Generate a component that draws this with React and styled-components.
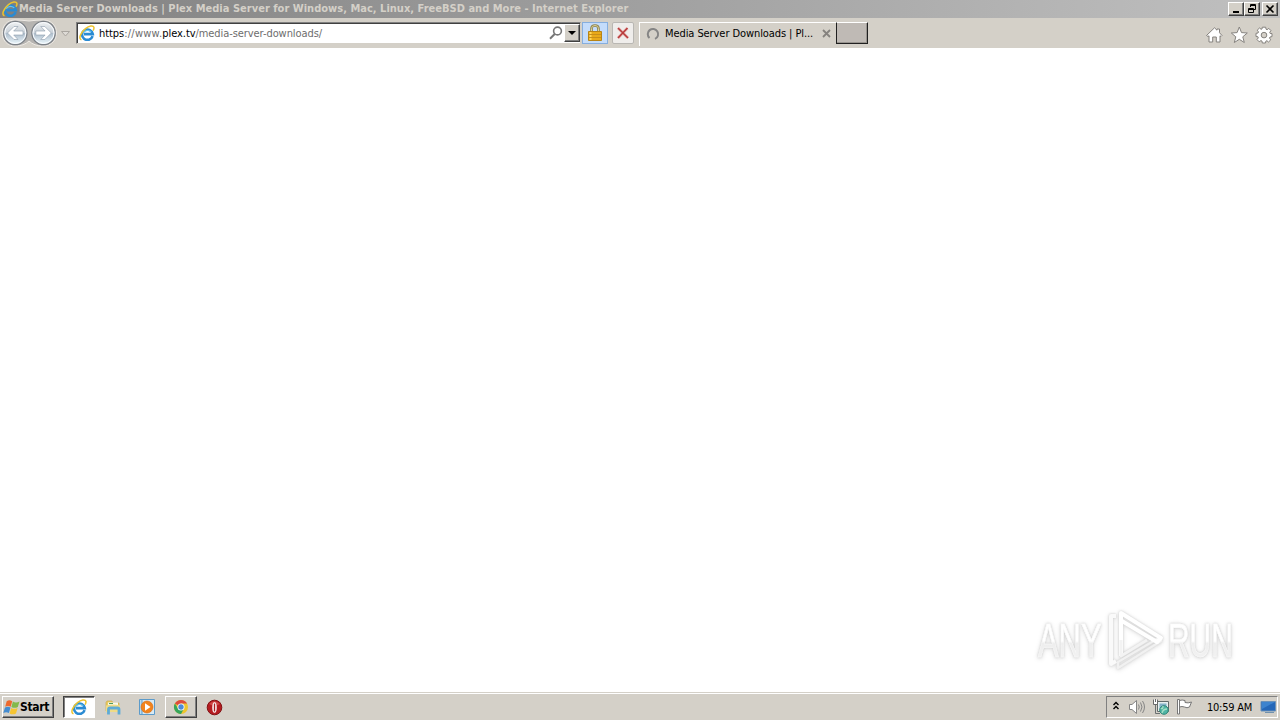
import styled, { createGlobalStyle, css } from "styled-components";

const GlobalStyle = createGlobalStyle`
  * {
    box-sizing: border-box;
  }

  body {
    margin: 0;
    overflow: hidden;
    font-family: "DejaVu Sans Condensed", "DejaVu Sans", "Liberation Sans", sans-serif;
    font-stretch: condensed;
    font-size: 11px;
    color: #000;
  }

  svg {
    display: block;
    flex: none;
  }
`;

const raised = css`
  border: 1px solid;
  border-color: #fff #404040 #404040 #fff;
  box-shadow: inset -1px -1px 0 #808080;
`;

const Screen = styled.div`
  display: flex;
  flex-direction: column;
  width: 1280px;
  height: 720px;
  background: #fff;
`;

const TitleBar = styled.header`
  display: flex;
  align-items: center;
  height: 18px;
  padding: 0 2px 0 2px;
  background: linear-gradient(90deg, #808080, #c0c0c0);
`;

const Title = styled.div`
  flex: 1;
  margin-left: 1px;
  color: #d4d0c8;
  font-weight: bold;
  line-height: 18px;
  white-space: nowrap;
  letter-spacing: 0.018px;
`;

const WindowButton = styled.button`
  ${raised}
  display: flex;
  align-items: center;
  justify-content: center;
  width: 16px;
  height: 14px;
  margin-left: ${({ $gap }) => $gap || 0}px;
  padding: 0;
  background: #d4d0c8;
`;

const NavBar = styled.nav`
  display: flex;
  align-items: flex-start;
  height: 30px;
  background: #d4d0c8;
`;

const AddressBar = styled.div`
  display: flex;
  align-items: center;
  width: 505px;
  height: 22px;
  margin: 4px 0 0 4px;
  padding-left: 2px;
  border: 1px solid;
  border-color: #808080 #d4d0c8 #d4d0c8 #808080;
  background: #fff;
  box-shadow: inset 1px 1px 0 #404040;
`;

const Url = styled.div`
  flex: 1;
  margin: 1px 0 0 4px;
  color: #6d6d6d;
  white-space: nowrap;
  letter-spacing: -0.07px;

  > b {
    color: #000;
    font-weight: normal;
  }
`;

const UrlHost = styled.span`
  letter-spacing: 0.25px;
`;

const DropButton = styled.button`
  ${raised}
  display: flex;
  align-items: center;
  justify-content: center;
  width: 16px;
  height: 18px;
  margin-left: 1px;
  padding: 0;
  background: #d4d0c8;
`;

const ToolButton = styled.button`
  display: flex;
  align-items: center;
  justify-content: center;
  width: ${({ $width }) => $width}px;
  height: 22px;
  margin: 4px 0 0 ${({ $gap }) => $gap}px;
  padding: 0;
  border: 1px solid ${({ $active }) => ($active ? "#86aede" : "#b9b7b3")};
  border-radius: ${({ $active }) => ($active ? 0 : 2)}px;
  background: ${({ $active }) => ($active ? "#c4dcfb" : "#efedeb")};
`;

const Tab = styled.div`
  display: flex;
  align-items: center;
  width: 197px;
  height: 24px;
  margin: 4px 0 0 5px;
  padding: 0 5px 2px 6px;
  border-top: 1px solid #fff;
  border-left: 1px solid #fff;
`;

const TabTitle = styled.div`
  flex: 1;
  margin-left: 5px;
  white-space: nowrap;
  letter-spacing: -0.08px;
`;

const NewTab = styled.div`
  width: 32px;
  height: 22px;
  margin-top: 4px;
  border: 1px solid;
  border-color: #fff #202020 #202020 #202020;
  background: #bfbab5;
  box-shadow: inset -1px -1px 0 #98948f;
`;

const CommandIcons = styled.div`
  display: flex;
  align-items: center;
  gap: 7px;
  margin: 8px 7px 0 auto;
`;

const Page = styled.main`
  display: flex;
  flex: 1;
  align-items: flex-end;
  justify-content: flex-end;
  padding: 0 47px 20px 0;
`;

const Watermark = styled.div`
  display: flex;
  align-items: center;
  height: 64px;
  filter: drop-shadow(0 0 1px #cfcfcf) drop-shadow(0 1px 2px #e2e2e2);
`;

const WatermarkWord = styled.div`
  width: ${({ $width }) => $width}px;

  > span {
    display: block;
    width: max-content;
    color: transparent;
    background: linear-gradient(#fff 52%, #eee 56%, #f4f4f4);
    background-clip: text;
    font-family: "Liberation Sans", Arial, sans-serif;
    font-size: 49px;
    line-height: 54px;
    -webkit-text-stroke: 0.6px #fafafa;
    transform: scaleX(${({ $scale }) => $scale});
    transform-origin: left;
  }
`;

const Taskbar = styled.footer`
  display: flex;
  align-items: flex-start;
  height: 28px;
  padding: 3px 2px 0;
  border-top: 1px solid #d4d0c8;
  background: #d4d0c8;
  box-shadow: inset 0 1px 0 #fff;
`;

const StartButton = styled.button`
  ${raised}
  display: flex;
  align-items: center;
  width: 52px;
  height: 22px;
  margin-right: 9px;
  padding: 0;
  background: #d4d0c8;
  font-family: inherit;
  font-size: 12px;
  font-weight: bold;
  font-stretch: condensed;
  letter-spacing: -0.35px;
`;

const TaskButton = styled.button`
  display: flex;
  align-items: center;
  justify-content: center;
  width: 34px;
  height: 22px;
  padding: 0;
  border: 1px solid transparent;
  background: transparent;
  ${({ $look }) =>
    $look === "raised" &&
    css`
      ${raised}
      width: 32px;
      margin-left: 1px;
    `}
  ${({ $look }) =>
    $look === "pressed" &&
    css`
      width: 32px;
      margin-right: 1px;
      border-color: #404040 #fff #fff #404040;
      background: #fff;
      box-shadow: inset 1px 1px 0 #808080;
    `}
`;

const Tray = styled.div`
  display: flex;
  align-items: center;
  width: 172px;
  height: 22px;
  margin-left: auto;
  padding-left: 5px;
  border: 1px solid;
  border-color: #808080 #fff #fff #808080;
`;

const TrayIcons = styled.div`
  display: flex;
  align-items: center;
  gap: 6px;
`;

const Clock = styled.div`
  width: 53px;
  margin: 1px 0 0 13px;
  white-space: nowrap;
  letter-spacing: -0.25px;
`;

const ExplorerIcon = ({ size = 16 }) => (
  <svg width={size} height={size} viewBox="0 0 16 16" fill="none">
    <path
      d="M13.6 11.2A5.4 5.2 0 1 1 13.8 9.1H5"
      stroke="#2a8bd3"
      strokeWidth="2.6"
    />
    <path d="M4.2 7.6Q7.8 3.4 12.3 6.8" stroke="#65c4ef" strokeWidth="1.2" />
    <path
      d="M2.5 14.8C-1.1 13.6 2 7.3 6.5 3.7C10 .8 14.2-.1 14.9 2.3C15.1 3.6 14.6 4.8 14 5.7"
      stroke="#edc32e"
      strokeWidth="1.5"
    />
  </svg>
);

const NavArrows = () => (
  <svg width="72" height="30" viewBox="0 0 72 30">
    <defs>
      <linearGradient id="glass" x2="0" y2="1">
        <stop stopColor="#f1f3f4" />
        <stop offset=".48" stopColor="#c9d1d8" />
        <stop offset=".5" stopColor="#acbbc9" />
        <stop offset="1" stopColor="#eefaff" />
      </linearGradient>
    </defs>
    <path
      d="M15 2Q22 2 29 3Q36 2 43 2C61 2 61 28 43 28Q34 28 29 23Q24 28 15 28C-2 28-2 2 15 2Z"
      fill="#b6b4b1"
      stroke="#eeeae5"
    />
    <g fill="url(#glass)" stroke="#7c8187" strokeWidth="1.2">
      <circle cx="15.3" cy="15" r="11.7" />
      <circle cx="43.5" cy="15" r="11.7" />
    </g>
    <g fill="none" stroke="#fafcff" strokeWidth="1">
      <circle cx="15.3" cy="15" r="10.5" />
      <circle cx="43.5" cy="15" r="10.5" />
    </g>
    <g fill="#fff" stroke="#8c9aab" strokeWidth=".6">
      <path d="M7.5 15L14 8.5H18L13.7 13H23V17H13.7L18 21.5H14Z" />
      <path d="M51.3 15L44.8 8.5H40.8L45.1 13H35.8V17H45.1L40.8 21.5H44.8Z" />
    </g>
    <path d="M61.5 13.5H69.5L65.5 18Z" fill="#dedbd6" stroke="#aaa6a0" />
  </svg>
);

const SearchIcon = () => (
  <svg width="14" height="14" viewBox="0 0 14 14" fill="none" stroke="#777">
    <circle cx="8.5" cy="5" r="3.9" strokeWidth="1.6" />
    <path d="M5.7 8L1 12.7" strokeWidth="2" />
  </svg>
);

const LockIcon = () => (
  <svg width="16" height="18" viewBox="0 0 16 18">
    <path d="M4.5 8V4.5Q4.5 1.5 8 1.5T11.5 4.5V8" fill="none" stroke="#8b8049" strokeWidth="2.6" />
    <path d="M4.5 8V4.5Q4.5 1.5 8 1.5T11.5 4.5V8" fill="none" stroke="#dbd29a" />
    <path d="M1.5 7.5H14.5V16.5H1.5Z" fill="#e9aa19" stroke="#b78416" />
    <path d="M3.5 8V16" stroke="#ffd75a" strokeWidth="2" />
    <path d="M2 10.5H14M2 13.5H14" stroke="#c98f18" />
  </svg>
);

const StopIcon = () => (
  <svg width="14" height="14" viewBox="0 0 14 14" fill="none">
    <path d="M2 2L12 12M11.5 2L2 12" stroke="#e8bbb9" strokeWidth="3" />
    <path d="M2 2L12 12M11.5 2L2 12" stroke="#b83b3b" strokeWidth="1.6" />
  </svg>
);

const Spinner = () => (
  <svg width="14" height="14" viewBox="0 0 14 14" fill="none">
    <path d="M3.5 11A5.2 5.2 0 1 1 9 11.9" stroke="#858585" strokeWidth="2" />
  </svg>
);

const TabClose = () => (
  <svg width="9" height="9" viewBox="0 0 9 9">
    <path d="M1 1L8 8M8 1L1 8" stroke="#85827e" strokeWidth="1.8" />
  </svg>
);

const HomeIcon = () => (
  <svg width="18" height="18" viewBox="0 0 18 18">
    <path
      d="M1.5 9.5L9.5 1.8L12 4.2V3H14.5V6.7L17 9.5L16 10.5L15 9.8V16H11.3V11H7.7V16H4V9.8L3 10.5Z"
      fill="#fff"
      stroke="#85827e"
    />
  </svg>
);

const StarIcon = () => (
  <svg width="18" height="18" viewBox="0 0 18 18">
    <path
      d="M9.3 1L11.5 6.6L17.3 7L12.8 10.8L14.3 16.5L9.3 13.3L4.3 16.5L5.8 10.8L1.3 7L7.1 6.6Z"
      fill="#fff"
      stroke="#85827e"
    />
  </svg>
);

const GearIcon = () => (
  <svg width="18" height="18" viewBox="0 0 18 18">
    <path
      d="M7.3 1.2H10.7L11 3.2L12.1 3.7L13.8 2.4L16 4.7L14.7 6.3L15 7.3L17 7.6V10.6L15 11L14.5 12.1L15.8 13.8L13.5 16L11.9 14.7L10.9 15.1L10.5 17H7.3L7 15.1L5.9 14.6L4.2 15.8L2 13.5L3.3 11.9L3 10.8L1 10.5V7.3L3 7L3.5 5.9L2.2 4.2L4.5 2L6.1 3.3L7 3Z"
      fill="#fff"
      stroke="#85827e"
    />
    <circle cx="9" cy="9.1" r="2.8" fill="#d4d0c8" stroke="#85827e" />
  </svg>
);

const WindowsFlag = () => (
  <svg width="17" height="17" viewBox="0 0 17 17">
    <path d="M3.7 2.2Q6.5.5 9.2 2.3L7.7 7.8Q5 6.2 2.2 7.8Z" fill="#ed692e" />
    <path d="M9.9 2.5Q12.8 4.3 16.5 2.5L14.8 8Q11.5 9.7 8.4 8Z" fill="#83b94b" />
    <path d="M2 8.6Q5 7 7.5 8.6L5.9 14Q3.2 12.5.3 14Z" fill="#448cd0" />
    <path d="M8.2 8.9Q11.2 10.6 14.6 8.9L13 14.5Q9.7 16.2 6.6 14.5Z" fill="#f6c532" />
  </svg>
);

const FolderIcon = () => (
  <svg width="17" height="17" viewBox="0 0 17 17">
    <path d="M1 3.5L2 2H7L8 4H14V12H1Z" fill="#e8ca62" stroke="#c7a644" strokeWidth=".6" />
    <path d="M3 3.5H13V6H3Z" fill="#f7f8ed" />
    <path d="M4 4.5H8" stroke="#4c9c5b" />
    <path d="M1 6.5Q8 4.5 15 6.5V13H1Z" fill="#efdb86" />
    <path d="M3.5 15.5V10.5Q3.5 9 5 9H12.5Q14 9 14 10.5V15.5" fill="none" stroke="#5eabd6" strokeWidth="2.8" />
  </svg>
);

const PlayerIcon = () => (
  <svg width="18" height="18" viewBox="0 0 18 18">
    <path d="M1.5 1.5H13.5V16.5H1.5Z" fill="#b8dbf1" stroke="#5c9bca" />
    <path d="M4 1.5H16.5V16.5H4Z" fill="#d8eaf4" stroke="#5c9bca" />
    <circle cx="9" cy="9" r="6" fill="#f2831c" stroke="#d56a12" strokeWidth=".6" />
    <path d="M7 5.3L12.5 9L7 12.7Z" fill="#fff" />
  </svg>
);

const ChromeIcon = () => (
  <svg width="16" height="16" viewBox="0 0 16 16">
    <circle cx="8" cy="8" r="7" fill="#edc52e" />
    <path d="M8 8L1.9 4.5A7 7 0 0 1 14.1 4.5H8Z" fill="#dc4b3e" />
    <path d="M1.9 4.5A7 7 0 0 0 8 15L11 9.5L5 9.5Z" fill="#35a55b" />
    <circle cx="8" cy="8" r="3.5" fill="#fff" />
    <circle cx="8" cy="8" r="2.7" fill="#4c8ad8" />
  </svg>
);

const OperaIcon = () => (
  <svg width="17" height="17" viewBox="0 0 17 17">
    <circle cx="8.5" cy="8.5" r="7.3" fill="#b51c20" stroke="#801013" />
    <path d="M3 5Q8.5-.5 14 5Q8.5 8 3 5Z" fill="#cf4746" />
    <ellipse cx="8.5" cy="8.5" rx="2.2" ry="5.3" fill="#fff" />
    <path d="M8.5 4.5V12.5" stroke="#a71d1f" strokeWidth="1.4" />
  </svg>
);

const SpeakerIcon = () => (
  <svg width="18" height="18" viewBox="0 0 18 18" fill="none" stroke="#858585">
    <path d="M1.5 6.5H4L8.5 2.5V15.5L4 11.5H1.5Z" fill="#fff" />
    <path d="M10.5 6.5Q12 9 10.5 11.5M12.5 4.5Q15.5 9 12.5 13.5M14.5 3Q18.5 9 14.5 15" />
  </svg>
);

const NetworkIcon = () => (
  <svg width="18" height="18" viewBox="0 0 18 18">
    <path d="M5.5 3.5H16.5V13.5H5.5Z" fill="#e6eeee" stroke="#626b6b" />
    <path d="M7.5 5.5H14.5V11.5H7.5Z" fill="#83b2c9" />
    <path d="M3.5 7V15.5H8" fill="none" stroke="#6b7171" />
    <path d="M1.5 1.5V6.5H5.5V1.5M3.5 1V4" fill="#fff" stroke="#686868" />
    <circle cx="12" cy="12" r="4.3" fill="#4fb5a5" stroke="#318779" />
    <path d="M9 10Q11 12 11 8M10 15Q11 11 15 11" fill="none" stroke="#a6dfc5" strokeWidth="1.3" />
  </svg>
);

const FlagIcon = () => (
  <svg width="18" height="18" viewBox="0 0 18 18">
    <path d="M3.5 2.5Q6 1.5 9 2.5V4.5Q12 5.5 15.5 4L13.5 9Q11 10.5 8.5 9Q6 8 3.5 9Z" fill="#fff" stroke="#777" />
    <path d="M1.5 1.5H3.5V16H1.5Z" fill="#fff" stroke="#777" />
  </svg>
);

const DesktopIcon = () => (
  <svg width="17" height="16" viewBox="0 0 17 16">
    <path d="M1 2.5H15.5V12H1Z" fill="#2567b8" stroke="#6b91b8" />
    <path d="M2 3H15L2 10Z" fill="#3d83ce" />
    <path d="M5 13.5H14" stroke="#7191ae" />
  </svg>
);

const PlayMark = () => (
  <svg width="64" height="64" viewBox="0 0 64 64" fill="none" stroke="#fff" strokeWidth="4" strokeLinejoin="round">
    <path d="M12 8H7V56L12 53" stroke="#fafafa" />
    <path d="M14 60L57 33L53 31L14 54Z" stroke="#f1f1f1" strokeWidth="2.5" />
    <path d="M17 48V5L57 30L53 34L18 13" />
    <path d="M17 32V48L43 32" stroke="#f3f3f3" strokeWidth="3" />
  </svg>
);

const App = () => {
  return (
    <Screen>
      <GlobalStyle />
      <TitleBar>
        <ExplorerIcon />
        <Title>
          Media Server Downloads | Plex Media Server for Windows, Mac, Linux, FreeBSD and More - Internet Explorer
        </Title>
        <WindowButton aria-label="Minimize">
          <svg width="10" height="10"><path d="M2 8H8" stroke="#000" strokeWidth="2" /></svg>
        </WindowButton>
        <WindowButton aria-label="Restore">
          <svg width="10" height="10" fill="none" stroke="#000">
            <path d="M3.5 3V.5H8.5V5.5H7M3 1.5H9M1.5 4.5H6.5V8.5H1.5ZM1 5.5H7" />
          </svg>
        </WindowButton>
        <WindowButton aria-label="Close" $gap={2}>
          <svg width="10" height="10"><path d="M1.5 1.5L8.5 8.5M8.5 1.5L1.5 8.5" stroke="#000" strokeWidth="1.6" /></svg>
        </WindowButton>
      </TitleBar>
      <NavBar>
        <NavArrows />
        <AddressBar>
          <ExplorerIcon />
          <Url>
            <b>https</b>
            <UrlHost>://www.</UrlHost>
            <b>plex.tv</b>/media-server-downloads/
          </Url>
          <SearchIcon />
          <DropButton aria-label="Show address list">
            <svg width="8" height="5"><path d="M0 0H8L4 4Z" /></svg>
          </DropButton>
        </AddressBar>
        <ToolButton $width={26} $gap={1} $active aria-label="Security report">
          <LockIcon />
        </ToolButton>
        <ToolButton $width={22} $gap={4} aria-label="Stop">
          <StopIcon />
        </ToolButton>
        <Tab>
          <Spinner />
          <TabTitle>Media Server Downloads | Pl...</TabTitle>
          <TabClose />
        </Tab>
        <NewTab />
        <CommandIcons>
          <HomeIcon />
          <StarIcon />
          <GearIcon />
        </CommandIcons>
      </NavBar>
      <Page>
        <Watermark>
          <WatermarkWord $width={66} $scale={0.63}>
            <span>ANY</span>
          </WatermarkWord>
          <PlayMark />
          <WatermarkWord $width={65} $scale={0.61}>
            <span>RUN</span>
          </WatermarkWord>
        </Watermark>
      </Page>
      <Taskbar>
        <StartButton>
          <WindowsFlag />
          Start
        </StartButton>
        <TaskButton $look="pressed" aria-label="Internet Explorer">
          <ExplorerIcon />
        </TaskButton>
        <TaskButton aria-label="Windows Explorer">
          <FolderIcon />
        </TaskButton>
        <TaskButton aria-label="Media Player">
          <PlayerIcon />
        </TaskButton>
        <TaskButton $look="raised" aria-label="Chrome">
          <ChromeIcon />
        </TaskButton>
        <TaskButton aria-label="Opera">
          <OperaIcon />
        </TaskButton>
        <Tray>
          <TrayIcons>
            <svg width="10" height="12" fill="none" stroke="#000" strokeWidth="1.4">
              <path d="M1.5 4L4 1.5L6.5 4M1.5 8L4 5.5L6.5 8" />
            </svg>
            <SpeakerIcon />
            <NetworkIcon />
            <FlagIcon />
          </TrayIcons>
          <Clock>10:59 AM</Clock>
          <DesktopIcon />
        </Tray>
      </Taskbar>
    </Screen>
  );
};

export default App;
